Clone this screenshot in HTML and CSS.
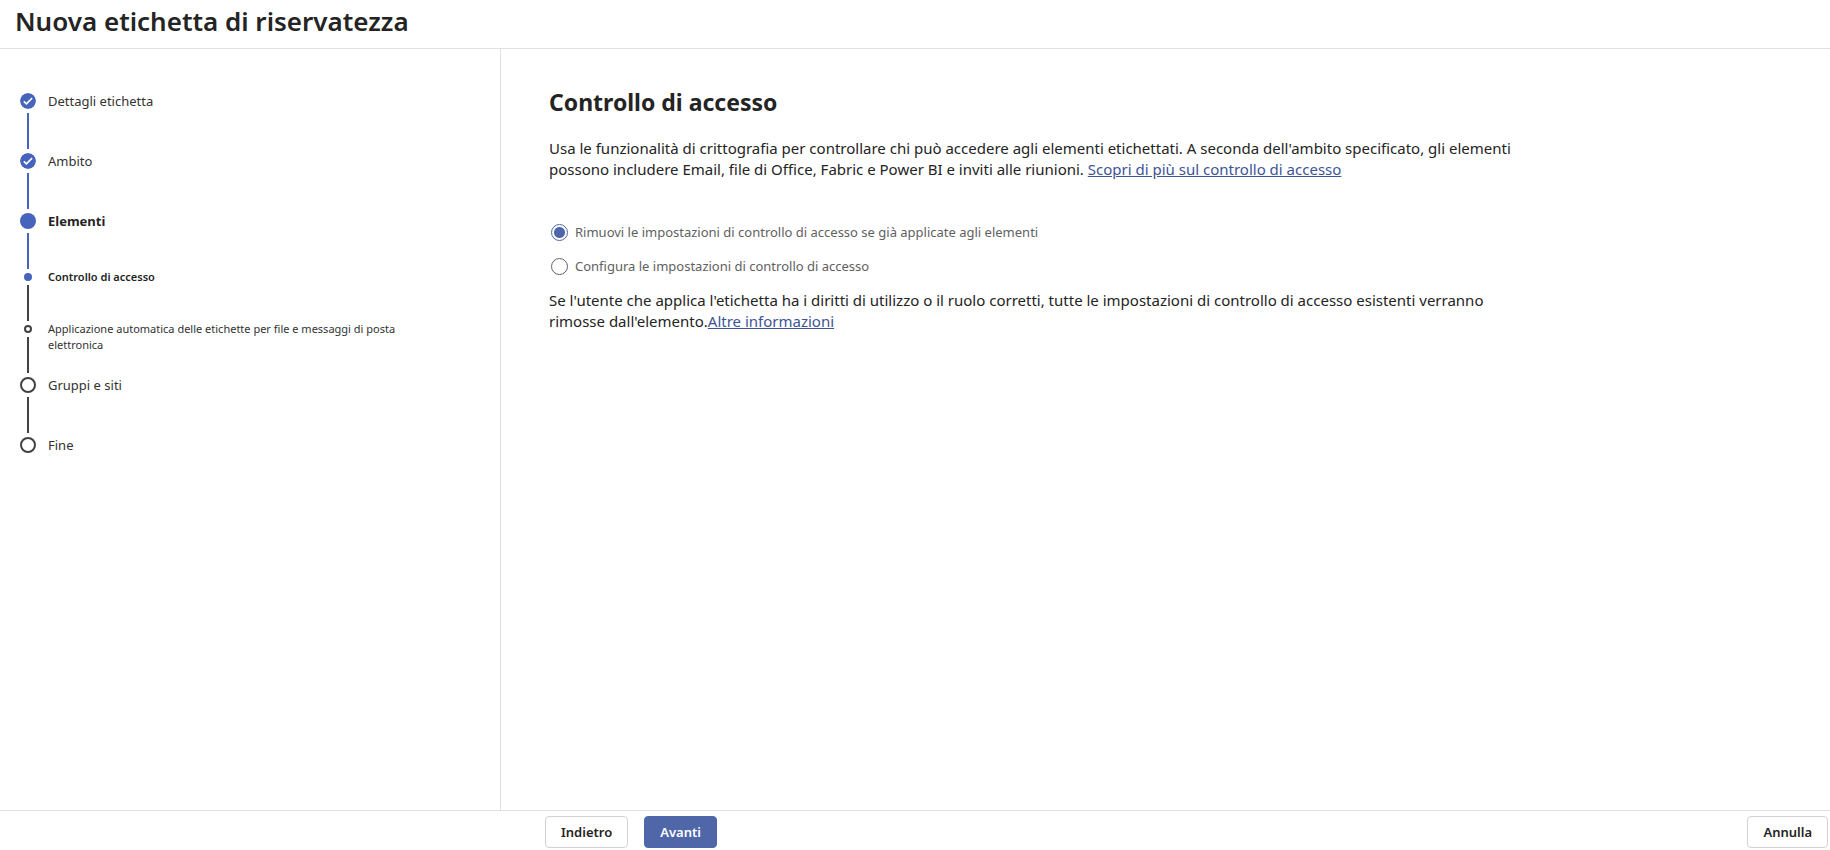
FILE: index.html
```html
<!DOCTYPE html>
<html lang="it">
<head>
    <meta charset="UTF-8">
    <meta name="viewport" content="width=device-width, initial-scale=1.0">
    <title>Nuova etichetta di riservatezza</title>
    <link rel="stylesheet" href="styles.css">
</head>
<body>
    <header>
        <h1>Nuova etichetta di riservatezza</h1>
    </header>

    <div class="wizard">
        <nav class="sidebar">
            <ol class="steps">
                <li class="step done">
                    <div class="track">
                        <svg class="dot" viewBox="0 0 16 16" aria-hidden="true">
                            <circle cx="8" cy="8" r="8" fill="currentColor"/>
                            <path d="M3.8 8.3l2.6 2.5 5.7-5.7" fill="none" stroke="#fff" stroke-width="1.6"/>
                        </svg>
                        <span class="line"></span>
                    </div>
                    <span class="label">Dettagli etichetta</span>
                </li>
                <li class="step done">
                    <div class="track">
                        <svg class="dot" viewBox="0 0 16 16" aria-hidden="true">
                            <circle cx="8" cy="8" r="8" fill="currentColor"/>
                            <path d="M3.8 8.3l2.6 2.5 5.7-5.7" fill="none" stroke="#fff" stroke-width="1.6"/>
                        </svg>
                        <span class="line"></span>
                    </div>
                    <span class="label">Ambito</span>
                </li>
                <li class="step done current">
                    <div class="track">
                        <span class="dot"></span>
                        <span class="line"></span>
                    </div>
                    <span class="label">Elementi</span>
                </li>
                <li class="step sub current" aria-current="step">
                    <div class="track">
                        <span class="dot"></span>
                        <span class="line"></span>
                    </div>
                    <span class="label">Controllo di accesso</span>
                </li>
                <li class="step sub">
                    <div class="track">
                        <span class="dot"></span>
                        <span class="line"></span>
                    </div>
                    <span class="label">Applicazione automatica delle etichette per file e messaggi di posta elettronica</span>
                </li>
                <li class="step">
                    <div class="track">
                        <span class="dot"></span>
                        <span class="line"></span>
                    </div>
                    <span class="label">Gruppi e siti</span>
                </li>
                <li class="step">
                    <div class="track">
                        <span class="dot"></span>
                    </div>
                    <span class="label">Fine</span>
                </li>
            </ol>
        </nav>

        <main>
            <h2>Controllo di accesso</h2>
            <p>Usa le funzionalità di crittografia per controllare chi può accedere agli elementi etichettati. A seconda dell'ambito specificato, gli elementi possono includere Email, file di Office, Fabric e Power BI e inviti alle riunioni. <a href="#">Scopri di più sul controllo di accesso</a></p>

            <div class="options" role="radiogroup" aria-label="Controllo di accesso">
                <div class="option">
                    <input type="radio" name="access" id="remove" checked>
                    <label for="remove">Rimuovi le impostazioni di controllo di accesso se già applicate agli elementi</label>
                </div>
                <div class="option">
                    <input type="radio" name="access" id="configure">
                    <label for="configure">Configura le impostazioni di controllo di accesso</label>
                </div>
            </div>

            <p>Se l'utente che applica l'etichetta ha i diritti di utilizzo o il ruolo corretti, tutte le impostazioni di controllo di accesso esistenti verranno rimosse dall'elemento.<a href="#">Altre informazioni</a></p>
        </main>
    </div>

    <footer>
        <button type="button">Indietro</button>
        <button type="button" class="primary">Avanti</button>
        <button type="button" class="cancel">Annulla</button>
    </footer>
</body>
</html>
```

FILE: styles.css
```css
* {
    box-sizing: border-box;
}
body {
    display: flex;
    flex-direction: column;
    min-height: 100vh;
    margin: 0;
    font-family: "Noto Sans", "Open Sans", sans-serif;
    color: #242424;
    background: #fff;
}
header {
    padding: 3px 15px 9px;
    border-bottom: 1px solid #e0e0e0;
}
h1 {
    margin: 0;
    font-size: 26px;
    font-weight: 600;
    line-height: 36px;
}
.wizard {
    display: flex;
    flex: 1;
}

/* Steps */
.sidebar {
    flex: 0 0 501px;
    padding: 44px 64px 24px 20px;
    border-right: 1px solid #e0e0e0;
}
.steps {
    list-style: none;
    margin: 0;
    padding: 0;
}
.step {
    display: flex;
    gap: 12px;
    color: #424242;
}
.track {
    display: flex;
    flex-direction: column;
    align-items: center;
    flex: 0 0 16px;
    gap: 4px;
    padding-bottom: 4px;
}
.dot {
    width: 16px;
    height: 16px;
    border: 2px solid #424242;
    border-radius: 50%;
}
.line {
    width: 2px;
    height: 36px;
    background: #424242;
}
.label {
    max-width: 376px;
    font-size: 13px;
    line-height: 16px;
    color: #323232;
}
.sub .dot {
    width: 8px;
    height: 8px;
}
.sub .label {
    margin-top: -4px;
    font-size: 11px;
}
.done .dot,
.current .dot {
    border: none;
    color: #4664bc;
}
.current .dot,
.done .line {
    background: #4664bc;
}
.current .label {
    font-weight: 700;
    color: #242424;
}
.sub.current .label {
    font-weight: 600;
}

/* Content */
main {
    flex: 1;
    padding: 37px 48px 24px;
}
h2 {
    margin: 0 0 20px;
    font-size: 23px;
    font-weight: 700;
    line-height: 32px;
}
p {
    max-width: 980px;
    margin: 0;
    font-size: 15px;
    line-height: 21px;
}
a {
    color: #3d5497;
}
.options {
    display: flex;
    flex-direction: column;
    gap: 14px;
    margin: 42px 0 14px;
}
.option {
    display: flex;
    align-items: center;
    gap: 7px;
}
.option label {
    font-size: 13px;
    line-height: 20px;
    color: #616161;
}
.option input {
    appearance: none;
    width: 17px;
    height: 17px;
    margin: 0 0 0 2px;
    border: 1px solid #616161;
    border-radius: 50%;
}
.option input:checked {
    border-color: #4f66a8;
    background: radial-gradient(circle, #4f66a8 5px, transparent 6px);
}

/* Footer */
footer {
    display: flex;
    gap: 16px;
    padding: 5px 2px 2px 545px;
    border-top: 1px solid #e0e0e0;
}
button {
    height: 32px;
    padding: 0 15px;
    border: 1px solid #d1d1d1;
    border-radius: 4px;
    font-family: inherit;
    font-size: 13px;
    font-weight: 600;
    color: #242424;
    background: #fff;
    cursor: pointer;
}
.primary {
    border-color: #4f66a8;
    color: #fff;
    background: #4f66a8;
}
.cancel {
    margin-left: auto;
}
```
